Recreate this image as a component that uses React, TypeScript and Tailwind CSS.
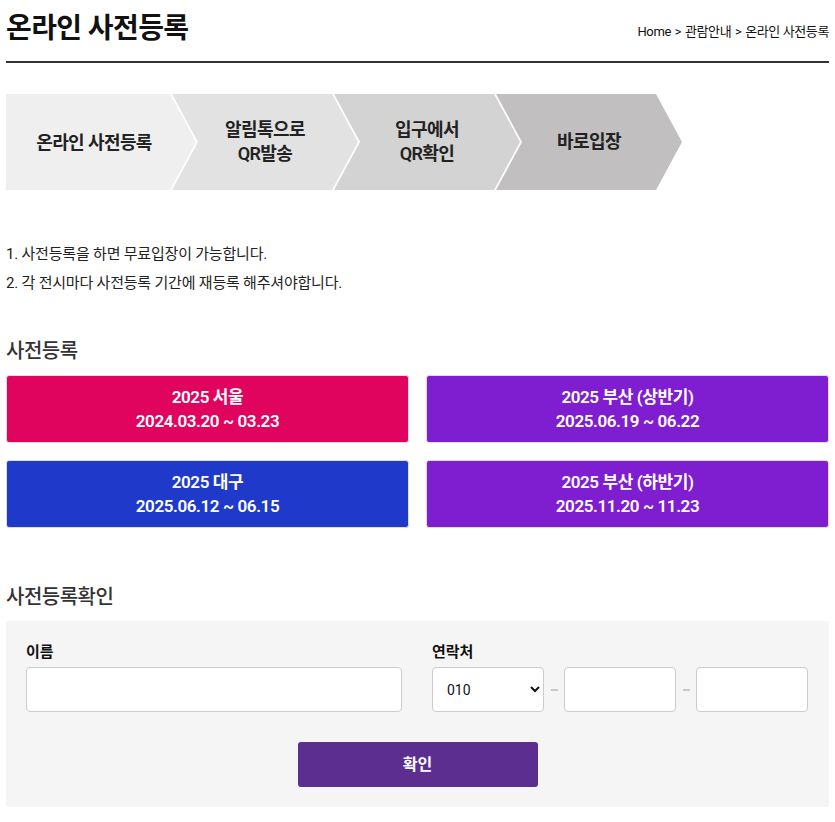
import React from 'react';

const steps = [
  { label: ['온라인 사전등록'], bg: 'bg-[#efefef]', first: true },
  { label: ['알림톡으로', 'QR발송'], bg: 'bg-[#e2e2e2]' },
  { label: ['입구에서', 'QR확인'], bg: 'bg-[#d3d3d3]' },
  { label: ['바로입장'], bg: 'bg-[#c1bfbf]' },
];

const events = [
  { title: '2025 서울', date: '2024.03.20 ~ 03.23', bg: 'bg-[#e0045f]' },
  { title: '2025 부산 (상반기)', date: '2025.06.19 ~ 06.22', bg: 'bg-[#7f1dd1]' },
  { title: '2025 대구', date: '2025.06.12 ~ 06.15', bg: 'bg-[#1f3acb]' },
  { title: '2025 부산 (하반기)', date: '2025.11.20 ~ 11.23', bg: 'bg-[#7f1dd1]' },
];

function Steps() {
  return (
    <div className="flex h-[96px] mt-[31px]">
      {steps.map((s, i) =>
        s.first ? (
          <div
            key={i}
            className={`${s.bg} w-[190px] shrink-0 flex items-center [clip-path:polygon(0_0,164px_0,190px_50%,164px_100%,0_100%)]`}
          >
            <span className="w-[176px] text-center text-[18px] font-semibold text-[#222] tracking-[-0.6px]">
              {s.label[0]}
            </span>
          </div>
        ) : (
          <div
            key={i}
            className={`${s.bg} w-[186px] shrink-0 -ml-[24px] flex items-center pl-[26px] [clip-path:polygon(0_0,160px_0,186px_50%,160px_100%,0_100%,26px_50%)]`}
          >
            <span className="w-[134px] text-center text-[18px] font-semibold leading-[24px] text-[#222] tracking-[-0.6px]">
              {s.label.map((l, j) => (
                <span key={j} className="block">
                  {l}
                </span>
              ))}
            </span>
          </div>
        )
      )}
    </div>
  );
}

function Dash() {
  return (
    <span className="w-[20px] flex justify-center">
      <span className="w-[7px] h-[2px] bg-[#c8c8c8]" />
    </span>
  );
}

export default function App() {
  return (
    <div className="min-h-screen bg-white px-[6px] pb-[16px] font-['Roboto','Noto_Sans_CJK_KR',sans-serif] text-[#111]">
      {/* header */}
      <div className="flex items-end justify-between h-[63px] pb-[18px] border-b-2 border-[#333]">
        <h1 className="text-[28px] font-bold leading-none tracking-[-0.6px] text-[#111]">온라인 사전등록</h1>
        <div className="text-[13px] tracking-[-0.4px] text-[#111] mb-[2px]">
          Home <span className="mx-[1px]">&gt;</span> 관람안내 <span className="mx-[1px]">&gt;</span> 온라인 사전등록
        </div>
      </div>

      <Steps />

      {/* notice */}
      <ul className="mt-[50px] text-[15px] leading-[29px] text-[#222] tracking-[-0.2px]">
        <li>1. 사전등록을 하면 무료입장이 가능합니다.</li>
        <li>2. 각 전시마다 사전등록 기간에 재등록 해주셔야합니다.</li>
      </ul>

      {/* events */}
      <h2 className="mt-[39px] text-[20px] font-medium leading-[28px] text-[#333] tracking-[-0.5px]">사전등록</h2>
      <div className="mt-[10px] grid grid-cols-2 gap-x-[17px] gap-y-[17px]">
        {events.map((e, i) => (
          <button
            key={i}
            className={`${e.bg} h-[68px] rounded-[3px] border border-[#ddd] text-white text-[17px] font-semibold leading-[24px] flex flex-col items-center justify-center tracking-[-0.4px]`}
          >
            <span>{e.title}</span>
            <span>{e.date}</span>
          </button>
        ))}
      </div>

      {/* check */}
      <h2 className="mt-[55px] text-[20px] font-medium leading-[28px] text-[#333] tracking-[-0.5px]">사전등록확인</h2>
      <div className="mt-[10px] bg-[#f5f5f5] rounded-[3px] px-[20px] pt-[20px] pb-[20px]">
        <div className="flex gap-[30px]">
          <div className="w-[376px]">
            <div className="text-[15px] font-bold leading-[22px] text-[#111]">이름</div>
            <input className="mt-[4px] w-full h-[45px] bg-white border border-[#ccc] rounded-[4px] px-[10px] outline-none" />
          </div>
          <div>
            <div className="text-[15px] font-bold leading-[22px] text-[#111]">연락처</div>
            <div className="mt-[4px] flex items-center">
              <select className="w-[112px] h-[45px] bg-white border border-[#ccc] rounded-[4px] pl-[10px] pr-[6px] text-[14px] text-[#111] outline-none">
                <option>010</option>
              </select>
              <Dash />
              <input className="w-[112px] h-[45px] bg-white border border-[#ccc] rounded-[4px] outline-none" />
              <Dash />
              <input className="w-[112px] h-[45px] bg-white border border-[#ccc] rounded-[4px] outline-none" />
            </div>
          </div>
        </div>
        <div className="mt-[30px] flex justify-center">
          <button className="w-[240px] h-[45px] bg-[#5c2e8f] rounded-[3px] text-white text-[16px] font-bold">확인</button>
        </div>
      </div>
    </div>
  );
}
